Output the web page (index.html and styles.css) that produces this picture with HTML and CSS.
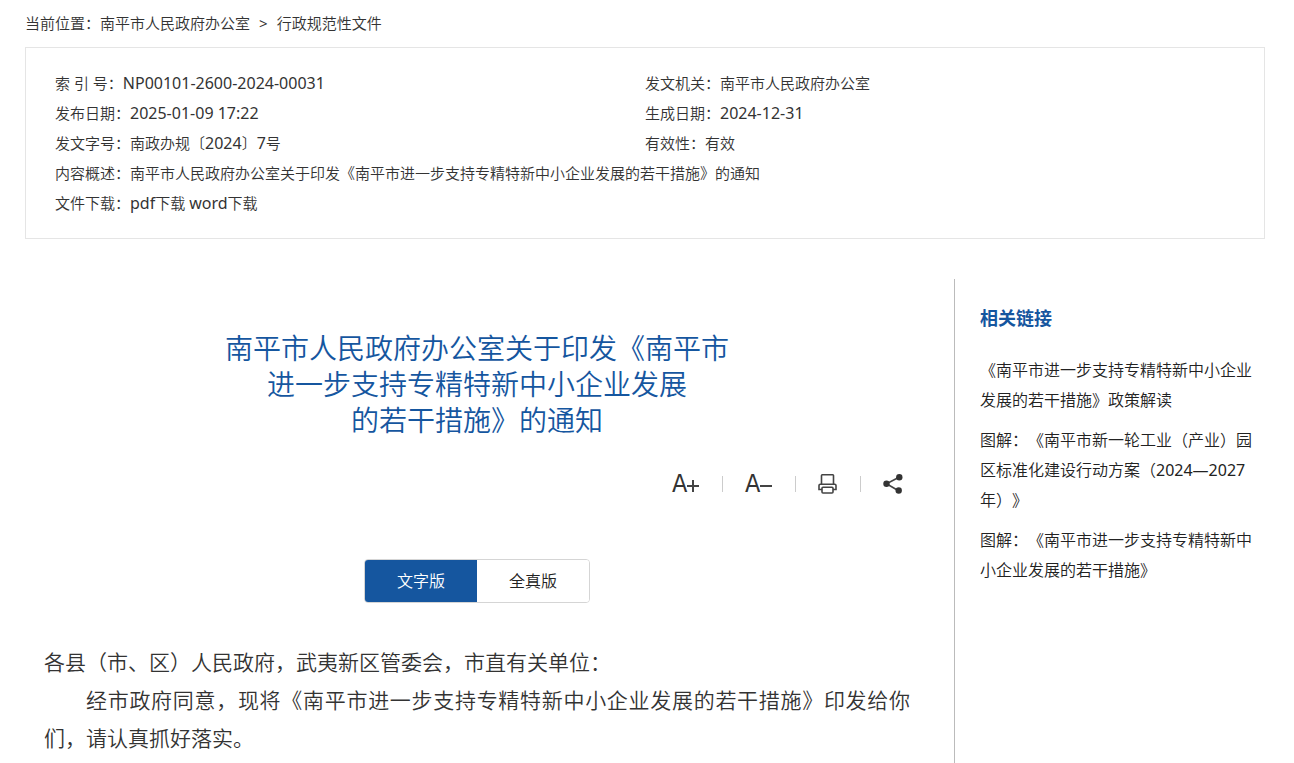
FILE: index.html
```html
<!DOCTYPE html>
<html lang="zh-CN">
<head>
  <meta charset="UTF-8" />
  <meta name="viewport" content="width=device-width, initial-scale=1" />
  <title>南平市人民政府办公室 - 行政规范性文件</title>
  <link rel="stylesheet" href="styles.css">
</head>
<body>
  <nav class="crumbs">
    当前位置：<a href="#">南平市人民政府办公室</a><span class="arrow">&gt;</span><a href="#">行政规范性文件</a>
  </nav>

  <ul class="info">
    <li>索 引 号：<span class="num">NP00101-2600-2024-00031</span></li>
    <li>发文机关：南平市人民政府办公室</li>
    <li>发布日期：<span class="num">2025-01-09 17:22</span></li>
    <li>生成日期：<span class="num">2024-12-31</span></li>
    <li>发文字号：南政办规〔<span class="num">2024</span>〕<span class="num">7</span>号</li>
    <li>有效性：有效</li>
    <li class="wide">内容概述：南平市人民政府办公室关于印发《南平市进一步支持专精特新中小企业发展的若干措施》的通知</li>
    <li class="wide">文件下载：<a href="#"><span class="num">pdf</span>下载</a> <a href="#"><span class="num">word</span>下载</a></li>
  </ul>

  <div class="main">
    <article class="article">
      <h1 class="title">南平市人民政府办公室关于印发《南平市<br>进一步支持专精特新中小企业发展<br>的若干措施》的通知</h1>

      <div class="tools">
        <button type="button" class="tool font-tool" title="放大字体">A<svg width="12" height="12" viewBox="0 0 12 12"><path d="M0 6h12M6 0v12"/></svg></button>
        <span class="line"></span>
        <button type="button" class="tool font-tool" title="缩小字体">A<svg width="12" height="12" viewBox="0 0 12 12"><path d="M0 6h12"/></svg></button>
        <span class="line"></span>
        <button type="button" class="tool" title="打印">
          <svg width="20" height="20" viewBox="0 0 20 20">
            <path d="M3.500 10V1.500Q3.500 .8 4.200 .8H14.800Q15.500 .8 15.500 1.500V10"/>
            <path d="M4 15.500H1V11.500Q1 10.200 2.300 10.200H16.700Q18 10.200 18 11.500V15.500H15"/>
            <rect x="4" y="13.300" width="11" height="5.700" rx="1"/>
          </svg>
        </button>
        <span class="line"></span>
        <button type="button" class="tool" title="分享">
          <svg width="20" height="20" viewBox="0 0 20 20">
            <path d="M16 3.300 3.500 9.800 15.500 16.700"/>
            <circle class="dot" cx="16.300" cy="3.300" r="3.200"/>
            <circle class="dot" cx="3.500" cy="9.800" r="3.200"/>
            <circle class="dot" cx="15.700" cy="16.500" r="3.200"/>
          </svg>
        </button>
      </div>

      <div class="tabs">
        <button type="button" class="tab active">文字版</button>
        <button type="button" class="tab">全真版</button>
      </div>

      <div class="content">
        <p>各县（市、区）人民政府，武夷新区管委会，市直有关单位：</p>
        <p class="indent">经市政府同意，现将《南平市进一步支持专精特新中小企业发展的若干措施》印发给你们，请认真抓好落实。</p>
      </div>
    </article>

    <aside class="related">
      <h2>相关链接</h2>
      <ul>
        <li><a href="#">《南平市进一步支持专精特新中小企业发展的若干措施》政策解读</a></li>
        <li><a href="#">图解：《南平市新一轮工业（产业）园区标准化建设行动方案（<span class="num">2024—2027</span>年）》</a></li>
        <li><a href="#">图解：《南平市进一步支持专精特新中小企业发展的若干措施》</a></li>
      </ul>
    </aside>
  </div>
</body>
</html>
```
FILE: styles.css
```css
* {
  box-sizing: border-box;
}
body {
  margin: 0;
  padding: 0 29px 0 25px;
  min-height: 100vh;
  display: flex;
  flex-direction: column;
  background: #fff;
  color: #333;
  font: 15px/30px "Noto Sans", "Noto Sans CJK SC", sans-serif;
  font-weight: 350;
  text-spacing-trim: space-all;
}
h1, h2, p, ul {
  margin: 0;
  padding: 0;
}
ul {
  list-style: none;
}
a {
  color: inherit;
  text-decoration: none;
}
.num {
  font-size: 16px;
  font-weight: 400;
}

/* breadcrumb */
.crumbs {
  padding: 8px 0 9px;
}
.crumbs .arrow {
  margin: 0 9px;
  font-weight: 400;
}

/* document info */
.info {
  display: grid;
  grid-template-columns: 1fr 1fr;
  grid-auto-rows: 30px;
  padding: 20px 29px;
  border: 1px solid #e5e5e5;
}
.info .wide {
  grid-column: 1 / 3;
}

.main {
  flex: 1;
  display: flex;
  margin-top: 40px;
}
.article {
  flex: 1;
  padding: 51px 44px 0 19px;
}
.title {
  color: #15569f;
  font-size: 28px;
  line-height: 36px;
  font-weight: 350;
  text-align: center;
}

/* font size, print, share */
.tools {
  display: flex;
  justify-content: flex-end;
  align-items: center;
  gap: 22px;
  height: 30px;
  margin-top: 31px;
  padding-right: 7px;
}
.tool {
  display: flex;
  align-items: center;
  padding: 0;
  border: none;
  background: none;
  color: #333;
  cursor: pointer;
}
.tool svg {
  fill: none;
  stroke: #444;
  stroke-width: 1.6;
}
.tool .dot {
  fill: #333;
  stroke: none;
}
.font-tool {
  width: 28px;
  font: 25px/30px "DejaVu Sans Condensed", "Liberation Sans", sans-serif;
}
.font-tool svg {
  flex: none;
  margin-top: 4px;
  stroke-width: 2;
}
.line {
  width: 1px;
  height: 16px;
  background: #ccc;
}

.tabs {
  display: flex;
  width: 226px;
  height: 44px;
  margin: 60px auto 0;
  border: 1px solid #d5d5d5;
  border-radius: 4px;
  overflow: hidden;
}
.tab {
  flex: 1;
  padding: 0;
  border: none;
  background: #fff;
  color: #222;
  font: inherit;
  font-size: 16px;
  cursor: pointer;
}
.tab.active {
  background: #15569f;
  color: #fff;
}

.content {
  margin-top: 40px;
  font-size: 21px;
  line-height: 38px;
  text-align: justify;
}
.content .indent {
  text-indent: 2em;
}

/* sidebar */
.related {
  width: 311px;
  padding: 24px 10px 0 25px;
  border-left: 1px solid #bbb;
  color: #222;
  font-size: 16px;
}
.related h2 {
  margin-bottom: 22px;
  color: #15569f;
  font-size: 18px;
  line-height: 30px;
  font-weight: bold;
}
.related li {
  margin-bottom: 10px;
}
```
